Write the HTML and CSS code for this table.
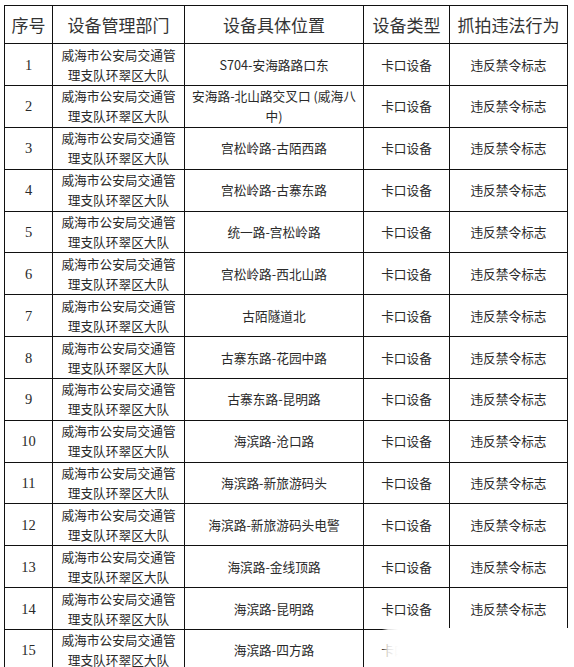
FILE: index.html
```html
<!DOCTYPE html>
<html lang="zh-CN">
<head>
<meta charset="utf-8">
<title>设备列表</title>
<link rel="stylesheet" href="styles.css">
</head>
<body>
<div class="page">
<table class="grid">
<colgroup>
<col class="c-no"><col class="c-dept"><col class="c-loc"><col class="c-type"><col class="c-act">
</colgroup>
<thead>
<tr><th>序号</th><th>设备管理部门</th><th>设备具体位置</th><th>设备类型</th><th>抓拍违法行为</th></tr>
</thead>
<tbody>
<tr><td class="no">1</td><td class="dept">威海市公安局交通管<br>理支队环翠区大队</td><td>S704-安海路路口东</td><td>卡口设备</td><td>违反禁令标志</td></tr>
<tr><td class="no">2</td><td class="dept">威海市公安局交通管<br>理支队环翠区大队</td><td>安海路-北山路交叉口 (威海八<br>中)</td><td>卡口设备</td><td>违反禁令标志</td></tr>
<tr><td class="no">3</td><td class="dept">威海市公安局交通管<br>理支队环翠区大队</td><td>宫松岭路-古陌西路</td><td>卡口设备</td><td>违反禁令标志</td></tr>
<tr><td class="no">4</td><td class="dept">威海市公安局交通管<br>理支队环翠区大队</td><td>宫松岭路-古寨东路</td><td>卡口设备</td><td>违反禁令标志</td></tr>
<tr><td class="no">5</td><td class="dept">威海市公安局交通管<br>理支队环翠区大队</td><td>统一路-宫松岭路</td><td>卡口设备</td><td>违反禁令标志</td></tr>
<tr><td class="no">6</td><td class="dept">威海市公安局交通管<br>理支队环翠区大队</td><td>宫松岭路-西北山路</td><td>卡口设备</td><td>违反禁令标志</td></tr>
<tr><td class="no">7</td><td class="dept">威海市公安局交通管<br>理支队环翠区大队</td><td>古陌隧道北</td><td>卡口设备</td><td>违反禁令标志</td></tr>
<tr><td class="no">8</td><td class="dept">威海市公安局交通管<br>理支队环翠区大队</td><td>古寨东路-花园中路</td><td>卡口设备</td><td>违反禁令标志</td></tr>
<tr><td class="no">9</td><td class="dept">威海市公安局交通管<br>理支队环翠区大队</td><td>古寨东路-昆明路</td><td>卡口设备</td><td>违反禁令标志</td></tr>
<tr><td class="no">10</td><td class="dept">威海市公安局交通管<br>理支队环翠区大队</td><td>海滨路-沧口路</td><td>卡口设备</td><td>违反禁令标志</td></tr>
<tr><td class="no">11</td><td class="dept">威海市公安局交通管<br>理支队环翠区大队</td><td>海滨路-新旅游码头</td><td>卡口设备</td><td>违反禁令标志</td></tr>
<tr><td class="no">12</td><td class="dept">威海市公安局交通管<br>理支队环翠区大队</td><td>海滨路-新旅游码头电警</td><td>卡口设备</td><td>违反禁令标志</td></tr>
<tr><td class="no">13</td><td class="dept">威海市公安局交通管<br>理支队环翠区大队</td><td>海滨路-金线顶路</td><td>卡口设备</td><td>违反禁令标志</td></tr>
<tr><td class="no">14</td><td class="dept">威海市公安局交通管<br>理支队环翠区大队</td><td>海滨路-昆明路</td><td>卡口设备</td><td>违反禁令标志</td></tr>
<tr><td class="no">15</td><td class="dept">威海市公安局交通管<br>理支队环翠区大队</td><td>海滨路-四方路</td><td>卡口设备</td><td>违反禁令标志</td></tr>
</tbody>
</table>
<div class="fade"></div>
</div>
</body>
</html>
```
FILE: styles.css
```css
html, body {
  margin: 0;
  padding: 0;
  background: #fff;
}
.page {
  position: relative;
  width: 574px;
  height: 667px;
  overflow: hidden;
  padding: 5px 0 0 4px;
  box-sizing: border-box;
}
.grid {
  border-collapse: collapse;
  table-layout: fixed;
  width: 563px;
  font-family: "Noto Sans CJK SC", "Noto Sans", sans-serif;
  color: #2a2a2a;
}
.c-no { width: 48px; }
.c-dept { width: 132px; }
.c-loc { width: 179px; }
.c-type { width: 86px; }
.c-act { width: 118px; }
.grid th, .grid td {
  border: 1.5px solid #111;
  padding: 0;
  text-align: center;
  vertical-align: middle;
}
.grid th {
  height: 37.2px;
  font-size: 17px;
  font-weight: 400;
  color: #333;
}
.grid td {
  height: 40.85px;
  font-size: 12.7px;
  line-height: 20px;
}
.grid td.no {
  font-family: "Liberation Serif", serif;
  font-size: 14.5px;
}
.fade {
  position: absolute;
  left: 382px;
  top: 628px;
  width: 192px;
  height: 42px;
  background: linear-gradient(to right, rgba(255,255,255,0) 0, rgba(255,255,255,0.85) 6px, #fff 16px);
}
```
